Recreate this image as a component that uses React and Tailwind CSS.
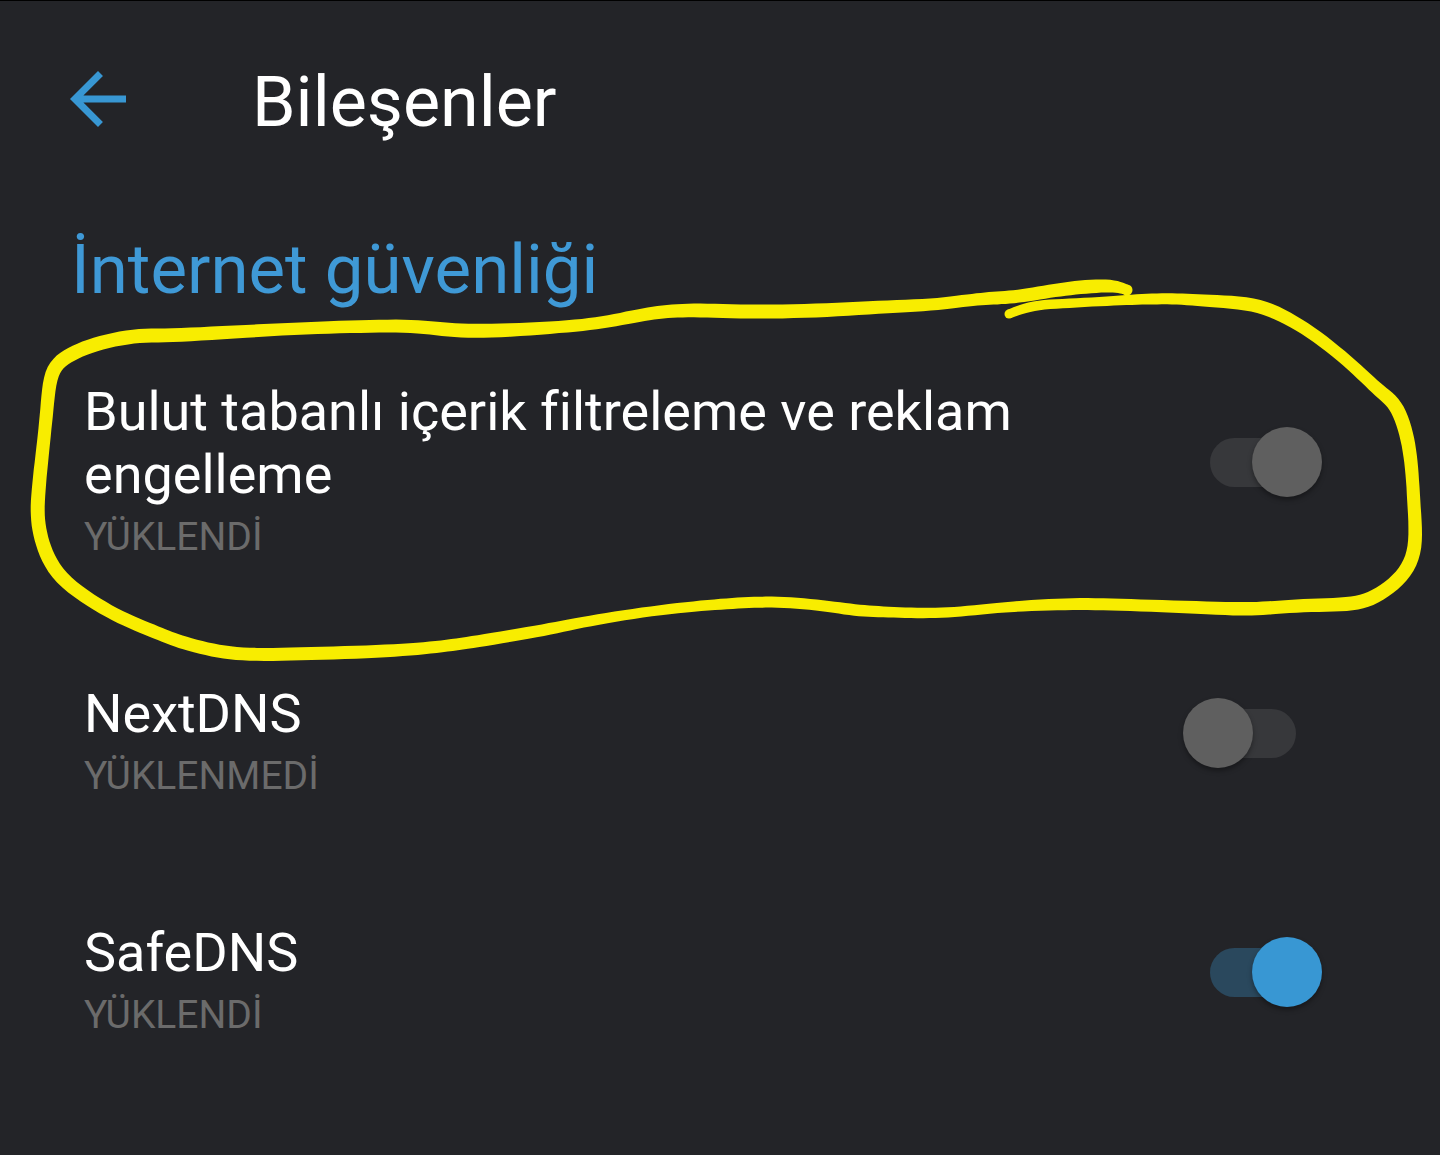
import React, { useState } from 'react';

const COMPONENTS = [
    { id: 'cloud', title: 'Bulut tabanlı içerik filtreleme ve reklam engelleme', status: 'YÜKLENDİ', on: true, locked: true, marked: true },
    { id: 'nextdns', title: 'NextDNS', status: 'YÜKLENMEDİ', on: false },
    { id: 'safedns', title: 'SafeDNS', status: 'YÜKLENDİ', on: true },
];

// pen samples: x, y, width
const PEN = [
    [1009, 314, 9], [1032, 305, 10], [1067, 303.5, 9], [1117, 300.5, 9.5], [1147, 299, 11], [1177, 298.5, 11],
    [1207, 301, 12], [1255, 303, 14], [1287, 317, 13], [1323, 340, 12], [1360, 372, 12], [1380, 392, 13],
    [1396, 403, 14], [1407, 433, 14], [1412, 467, 13], [1414, 507, 13], [1417, 549, 14], [1404, 577, 14],
    [1374, 599, 14], [1350, 605, 14], [1303, 605, 13], [1260, 609, 13.5], [1233, 609, 13.5], [1160, 606, 12],
    [1100, 604, 12], [1060, 604, 12], [1003, 607, 10], [960, 612, 10], [923, 613.5, 10.5], [887, 612, 10.5],
    [860, 611, 12], [830, 606.5, 11], [790, 602, 11], [753, 602, 11], [723, 604, 11], [680, 607.5, 10],
    [623, 615, 10], [573, 624, 11], [540, 631, 12], [480, 641, 12], [453, 645, 12], [420, 649, 12],
    [370, 652, 13], [297, 654, 13], [247, 655, 13], [213, 651, 13], [177, 641, 13], [163, 635, 13],
    [132, 623, 13], [98, 606, 13], [58, 578, 14], [43, 548, 14], [37, 520, 14], [38, 493, 14],
    [43, 447, 13], [47, 410, 13], [50, 370, 14], [66, 356, 14], [93, 344, 14], [135, 335, 14],
    [167, 336, 14], [233, 332, 13], [307, 328, 12], [373, 326, 13], [420, 326, 13], [453, 331, 14],
    [497, 331, 14], [563, 327, 12], [603, 323, 12], [640, 315, 13], [667, 311, 13], [697, 310, 14],
    [747, 312, 14], [817, 311, 14], [880, 307, 13], [933, 305, 12], [970, 300, 12], [993, 298, 13],
    [1017, 297, 13], [1050, 291, 13], [1080, 287, 14], [1113, 285, 13], [1127, 290, 10],
];

// smooth the samples, then walk both sides of the line
const penOutline = (pts) => {
    const line = [pts[0]];
    for (let i = 0; i < pts.length - 1; i++) {
        const a = pts[Math.max(i - 1, 0)];
        const b = pts[i];
        const c = pts[i + 1];
        const d = pts[Math.min(i + 2, pts.length - 1)];
        for (let s = 0; s < 6; s++) {
            const t = s / 6;
            line.push([0, 1, 2].map((k) => ((1 - t) ** 3 * a[k] + (3 * t ** 3 - 6 * t * t + 4) * b[k] + (-3 * t ** 3 + 3 * t * t + 3 * t + 1) * c[k] + t ** 3 * d[k]) / 6));
        }
    }
    line.push(pts[pts.length - 1]);

    const left = [];
    const right = [];
    line.forEach(([x, y, w], i) => {
        const p = line[Math.max(i - 1, 0)];
        const n = line[Math.min(i + 1, line.length - 1)];
        const len = Math.hypot(n[0] - p[0], n[1] - p[1]) || 1;
        const nx = (-(n[1] - p[1]) / len) * (w / 2);
        const ny = ((n[0] - p[0]) / len) * (w / 2);
        left.push(`${(x + nx).toFixed(1)} ${(y + ny).toFixed(1)}`);
        right.unshift(`${(x - nx).toFixed(1)} ${(y - ny).toFixed(1)}`);
    });
    return `M${left.concat(right).join('L')}Z`;
};

const PEN_PATH = penOutline(PEN);

const PenCircle = () => (
    <svg
        viewBox="0 270 1440 400"
        fill="#f8ed00"
        aria-hidden="true"
        className="absolute left-0 -top-[110px] w-full pointer-events-none"
    >
        <path d={PEN_PATH} />
        <circle cx="1009" cy="314" r="4.5" />
        <circle cx="1127" cy="290" r="5.5" />
    </svg>
);

const Switch = ({ id, checked, locked, onChange }) => (
    <input
        id={id}
        type="checkbox"
        role="switch"
        checked={checked}
        disabled={locked}
        onChange={onChange}
        className="appearance-none relative shrink-0 w-[140px] h-[70px] mb-4 cursor-pointer before:absolute before:left-[27px] before:top-[11px] before:w-[86px] before:h-[49px] before:rounded-full before:bg-[#37383b] after:absolute after:left-0 after:top-0 after:size-[70px] after:rounded-full after:bg-[#5f5f5f] after:shadow-[0_3px_5px_rgba(0,0,0,0.35)] checked:after:left-[69px] checked:enabled:before:bg-[#2a485d] checked:enabled:after:bg-[#3897d3]"
    />
);

const ComponentRow = ({ item }) => {
    const [on, setOn] = useState(item.on);

    return (
        <li className="relative flex items-center justify-between gap-10 pl-[84px] pr-[117px]">
            <label htmlFor={item.id} className="flex flex-col gap-2">
                <span className="text-[54px] leading-[63px] text-white">{item.title}</span>
                <span className="text-[39px] leading-[46px] text-[#6b6b6b]">{item.status}</span>
            </label>
            <Switch id={item.id} checked={on} locked={item.locked} onChange={(e) => setOn(e.target.checked)} />
            {item.marked && <PenCircle />}
        </li>
    );
};

const App = () => {
    return (
        <div className="min-h-screen bg-[#232428] border-t border-black font-['Roboto',sans-serif] [font-variant-ligatures:none]">
            <header className="flex items-start gap-[112px] pl-14 pt-[56px]">
                <button type="button" aria-label="Geri" className="text-[#3897d3]">
                    <svg viewBox="0 0 24 24" fill="currentColor" className="size-[84px]">
                        <path d="M20 11H7.83l5.59-5.59L12 4l-8 8 8 8 1.41-1.41L7.83 13H20v-2z" />
                    </svg>
                </button>
                <h1 className="pt-1 text-[70px] leading-[82px] text-white">Bileşenler</h1>
            </header>

            <main className="pt-[86px]">
                <h2 className="pl-[71px] text-[69px] leading-[82px] text-[#3f99d6]">İnternet güvenliği</h2>
                <ul className="mt-[69px] flex flex-col gap-[122px]">
                    {COMPONENTS.map((item) => (
                        <ComponentRow key={item.id} item={item} />
                    ))}
                </ul>
            </main>
        </div>
    );
};

export default App;
